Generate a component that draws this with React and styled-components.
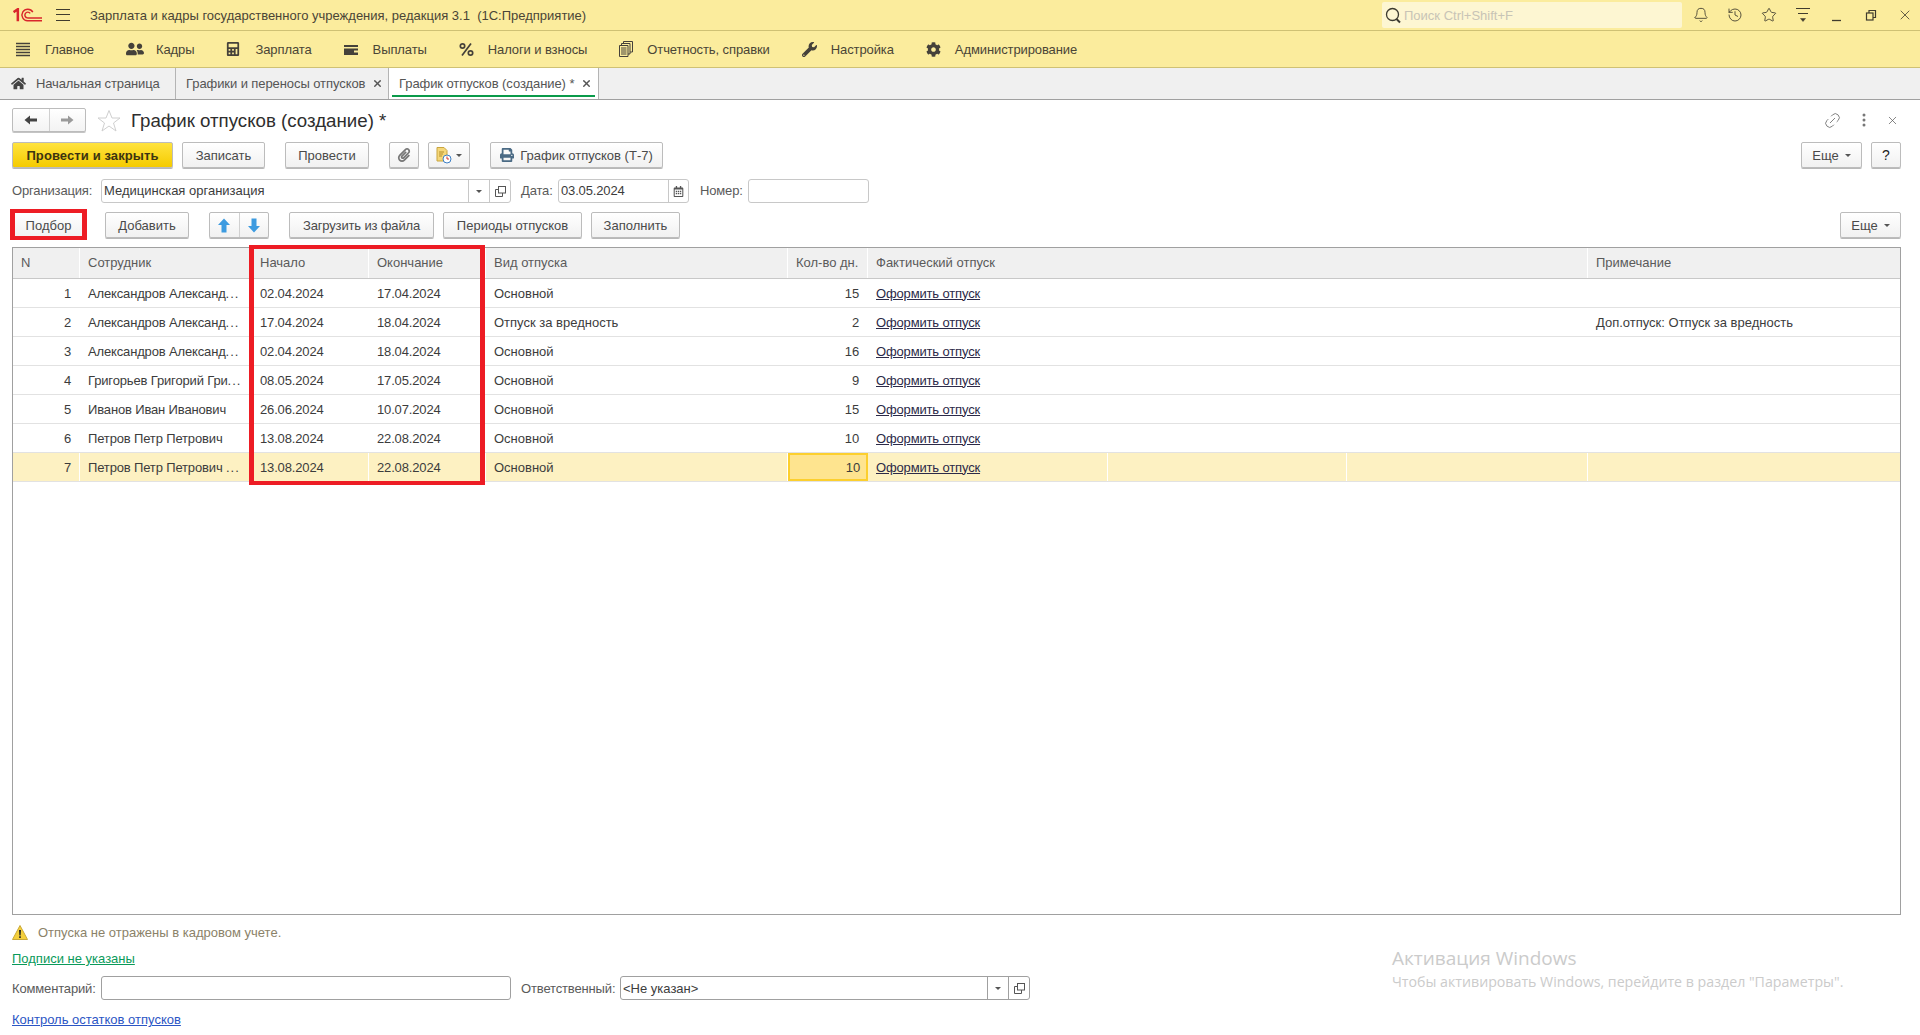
import React from 'react';
import styled, { createGlobalStyle } from 'styled-components';
import { Bell, History, Star, X, Link2 } from 'lucide-react';
import { FaHome, FaWrench, FaCog, FaPrint, FaPaperclip, FaUserFriends, FaCalculator, FaRegCalendarAlt } from 'react-icons/fa';

const GlobalStyle = createGlobalStyle`
  html, body { margin: 0; padding: 0; background: #fff; }
  body { font-family: "Liberation Sans", Arial, sans-serif; font-size: 13px; color: #3c3c3c; overflow: hidden; }
  * { box-sizing: border-box; }
`;

const Page = styled.div`
  position: relative;
  width: 1920px;
  height: 1035px;
  display: flex;
  flex-direction: column;
  overflow: hidden;
`;

/* ---- top bars ---- */
const TitleBar = styled.div`
  height: 31px;
  display: flex;
  align-items: center;
  padding: 0 7px 0 13px;
  background: #fbec9d;
  border-bottom: 1px solid #cfc174;
`;
const LogoBox = styled.div`
  display: flex;
  margin-right: 14px;
`;
const Burger = styled.div`
  width: 14px;
  height: 12px;
  margin-right: 20px;
  border-top: 1px solid #403c2e;
  border-bottom: 1px solid #403c2e;
  position: relative;
  &::after {
    content: '';
    position: absolute;
    left: 0; right: 0; top: 4px;
    border-top: 1px solid #403c2e;
  }
`;
const AppTitle = styled.div`
  flex: 1;
  color: #4a4536;
  font-size: 13px;
  white-space: pre;
`;
const Search = styled.div`
  width: 300px;
  height: 26px;
  margin-right: 11px;
  display: flex;
  align-items: center;
  gap: 2px;
  padding-left: 3px;
  background: #fdf6d2;
  border-radius: 2px;
  color: #c8c4b6;
  font-size: 13px;
`;
const SysIcons = styled.div`
  display: flex;
  align-items: center;
  gap: 18px;
  color: #403c2e;
`;
const SysIcon = styled.div`
  width: 16px;
  height: 16px;
  display: flex;
  align-items: center;
  justify-content: center;
`;

const SectionBar = styled.div`
  height: 37px;
  display: flex;
  align-items: center;
  gap: 32px;
  padding-left: 16px;
  background: #fbec9d;
  border-bottom: 1px solid #cfc174;
`;
const SectionItem = styled.div`
  display: flex;
  align-items: center;
  gap: ${({ $gap }) => $gap || 14}px;
  color: #4a4536;
  letter-spacing: -0.1px;
  white-space: nowrap;
  svg { flex: none; color: #45413a; }
`;

const TabBar = styled.div`
  height: 32px;
  display: flex;
  background: #f0f0f0;
  border-bottom: 1px solid #a0a0a0;
`;
const Tab = styled.div`
  position: relative;
  width: ${({ $w }) => $w}px;
  display: flex;
  align-items: center;
  gap: ${({ $home }) => ($home ? 10 : 7)}px;
  padding-left: ${({ $home }) => ($home ? 11 : 10)}px;
  border-right: 1px solid #b4b4b4;
  background: ${({ $active }) => ($active ? '#fff' : 'transparent')};
  color: #555;
  letter-spacing: ${({ $home }) => ($home ? -0.12 : -0.08)}px;
  white-space: nowrap;
  svg { flex: none; }
  ${({ $active }) =>
    $active &&
    `&::after {
      content: '';
      position: absolute;
      left: 3px; right: 3px; bottom: 2px;
      height: 2px;
      background: #0a9a4a;
    }`}
`;

/* ---- form ---- */
const Form = styled.div`
  flex: 1;
  display: flex;
  flex-direction: column;
  padding: 8px 19px 0 12px;
`;
const Heading = styled.div`
  height: 24px;
  display: flex;
  align-items: center;
`;
const NavGroup = styled.div`
  width: 74px;
  height: 24px;
  display: flex;
  border: 1px solid #bcbcbc;
  border-radius: 2px;
  box-shadow: 0 1px 0 #c4c4c4;
  background: linear-gradient(#fff, #f3f3f3);
  margin-right: 11px;
`;
const NavButton = styled.div`
  flex: 1;
  display: flex;
  align-items: center;
  justify-content: center;
  &:first-child { border-right: 1px solid #d0d0d0; }
`;
const FormTitle = styled.div`
  margin-left: 10px;
  padding-top: 1px;
  font-size: 18.7px;
  color: #2e2e2e;
  flex: 1;
`;
const HeadTools = styled.div`
  display: flex;
  align-items: center;
  gap: 20px;
  margin-right: 2px;
  color: #777;
`;
const Row = styled.div`
  display: flex;
  align-items: center;
  margin-top: ${({ $top }) => $top}px;
`;
const Button = styled.div`
  position: relative;
  height: 26px;
  width: ${({ $w }) => $w}px;
  margin-left: ${({ $ml }) => $ml || 0}px;
  display: flex;
  align-items: center;
  justify-content: center;
  gap: ${({ $gap }) => $gap || 6}px;
  flex: none;
  border: 1px solid #bcbcbc;
  border-radius: 2px;
  box-shadow: 0 1px 0 #b8b8b8;
  background: ${({ $primary }) =>
    $primary ? 'linear-gradient(#ffe33e, #f5cb00)' : 'linear-gradient(#fff, #f1f1f1)'};
  color: ${({ $primary }) => ($primary ? '#3c3410' : '#4a4a4a')};
  font-weight: ${({ $primary }) => ($primary ? 700 : 400)};
  letter-spacing: ${({ $primary, $tight }) => ($primary ? 0.1 : $tight ? -0.15 : 0)}px;
  white-space: nowrap;
`;
const HelpButton = styled(Button)`
  color: #222;
  font-size: 14px;
`;
const Caret = styled.span`
  width: 0;
  height: 0;
  border-left: 3px solid transparent;
  border-right: 3px solid transparent;
  border-top: 3px solid #555;
`;
const Spacer = styled.div`
  flex: 1;
`;
const SplitButton = styled(Button)`
  gap: 0;
  padding: 0;
`;
const SplitPart = styled.div`
  flex: 1;
  height: 100%;
  display: flex;
  align-items: center;
  justify-content: center;
  &:first-child { border-right: 1px solid #d0d0d0; }
`;
const Label = styled.div`
  margin-left: ${({ $ml }) => $ml || 0}px;
  width: ${({ $w }) => ($w ? `${$w}px` : 'auto')};
  padding-bottom: ${({ $lift }) => ($lift ? 2 : 0)}px;
  color: #5a5a5a;
  letter-spacing: -0.15px;
  white-space: nowrap;
  flex: none;
`;
const Field = styled.div`
  height: 24px;
  width: ${({ $w }) => $w}px;
  margin-left: ${({ $ml }) => $ml || 0}px;
  display: flex;
  align-items: center;
  flex: none;
  background: #fff;
  border: 1px solid ${({ $strong }) => ($strong ? '#a0a0a0' : '#c8c8c8')};
  border-radius: 3px;
  color: #3c3c3c;
`;
const FieldText = styled.div`
  flex: 1;
  padding-left: 2px;
  padding-bottom: ${({ $lift }) => ($lift ? 2 : 0)}px;
  letter-spacing: ${({ $tight }) => ($tight ? -0.15 : 0)}px;
  white-space: nowrap;
`;
const FieldAddon = styled.div`
  width: ${({ $w }) => $w}px;
  height: 100%;
  display: flex;
  align-items: center;
  justify-content: center;
  border-left: 1px solid ${({ $strong }) => ($strong ? '#a0a0a0' : '#c8c8c8')};
  color: #555;
`;
const Highlight = styled.div`
  position: absolute;
  border: solid #ed1c24;
  border-width: 4px 5px;
  pointer-events: none;
`;
const PickHighlight = styled(Highlight)`
  left: -3px;
  right: -3px;
  top: -4px;
  bottom: -3px;
`;

/* ---- table ---- */
const COLUMNS = '67px 172px 117px 117px 302px 80px 240px 239px 241px 312px';
const TableBox = styled.div`
  position: relative;
  height: 668px;
  margin-top: 9px;
  border: 1px solid #a0a0a0;
`;
const DatesHighlight = styled(Highlight)`
  left: 236px;
  top: -3px;
  width: 236px;
  height: 240px;
`;
const HeadRow = styled.div`
  height: 31px;
  display: grid;
  grid-template-columns: ${COLUMNS};
  background: #f0f0f0;
  border-bottom: 1px solid #c8c8c8;
`;
const HeadCell = styled.div`
  display: flex;
  align-items: center;
  padding: 0 8px 2px;
  color: #5a5a5a;
  border-right: 1px solid #fff;
  white-space: nowrap;
  grid-column: span ${({ $span }) => $span || 1};
  &:last-child { border-right: 0; }
`;
const DataRow = styled.div`
  height: 29px;
  display: grid;
  grid-template-columns: ${COLUMNS};
  background: ${({ $selected }) => ($selected ? '#fdf1c2' : '#fff')};
  border-bottom: 1px solid #e2e2e2;
`;
const Cell = styled.div`
  display: flex;
  align-items: center;
  justify-content: ${({ $right }) => ($right ? 'flex-end' : 'flex-start')};
  padding: 0 8px;
  min-width: 0;
  color: #3c3c3c;
  letter-spacing: ${({ $plain }) => ($plain ? 0 : -0.15)}px;
  white-space: pre;
  border-right: 1px solid ${({ $selected }) => ($selected ? '#fff' : 'transparent')};
  ${({ $current }) => $current && 'background: #fee48f; border: 2px solid #fccf2e; padding-right: 6px;'}
`;
const RowLink = styled.span`
  color: #2c2a48;
  text-decoration: underline;
`;
const CutMark = styled.span`
  letter-spacing: 1px;
`;

/* ---- footer ---- */
const Notice = styled.div`
  display: flex;
  align-items: center;
  gap: 10px;
  height: 18px;
  margin-top: 8px;
  color: #8b8269;
`;
const FooterLink = styled.div`
  margin-top: ${({ $top }) => $top}px;
  height: 16px;
  line-height: 16px;
  color: ${({ $color }) => $color};
  text-decoration: underline;
  white-space: nowrap;
`;
const Activation = styled.div`
  position: absolute;
  left: 1392px;
  top: 945px;
  color: #cbcbcb;
  font-family: "Open Sans", sans-serif;
  font-size: 14.2px;
  line-height: 22px;
  white-space: nowrap;
`;
const ActivationTitle = styled.div`
  font-size: 19px;
  line-height: 26px;
`;

const LogoIcon = () => (
  <svg width="29" height="14" viewBox="0 0 30 14" fill="none" stroke="#d9262c" strokeWidth="1.5">
    <path d="M0.5 4 L5 1 V13.5" strokeWidth="2.6" />
    <path d="M20.5 4 A6 6 0 1 0 15 13 H30" />
    <path d="M17.8 5.4 A3 3 0 1 0 15 10 H30" />
  </svg>
);
const SearchIcon = () => (
  <svg width="17" height="17" viewBox="0 0 17 17" fill="none" stroke="#3c3a30" strokeWidth="1.3">
    <circle cx="7.5" cy="7.5" r="6" />
    <path d="M11.5 12 L15 15.5" strokeWidth="2" />
  </svg>
);
const FilterIcon = () => (
  <svg width="16" height="16" viewBox="0 0 16 16" fill="#403c2e" stroke="#403c2e">
    <path d="M1 1.5 H15 M3 6.5 H13" fill="none" />
    <path d="M5.5 11.5 H10.5 L8 14.5 Z" strokeWidth="0.5" />
  </svg>
);
const MinimizeIcon = () => (
  <svg width="16" height="16" viewBox="0 0 16 16" stroke="#403c2e" strokeWidth="1.3">
    <path d="M3 13.5 H12" />
  </svg>
);
const RestoreIcon = () => (
  <svg width="16" height="16" viewBox="0 0 16 16" fill="none" stroke="#403c2e" strokeWidth="1.2">
    <rect x="3.5" y="6" width="6.5" height="7" />
    <path d="M6 6 V3.5 H12.5 V10.5 H10" />
  </svg>
);
const MenuIcon = () => (
  <svg width="15" height="15" viewBox="0 0 15 15" stroke="#45413a" strokeWidth="2">
    <path d="M0 1.5 H14 M0 4.5 H14 M0 7.5 H14 M0 10.5 H14 M0 13.5 H14" strokeWidth="1.6" />
  </svg>
);
const CardIcon = () => (
  <svg width="15" height="15" viewBox="0 0 15 15" fill="#45413a">
    <path d="M0 3 H14 V5 H0 Z M0 6.5 H14 V13 H0 Z" />
    <path d="M10 8.5 H14 V10.5 H10 Z" fill="#fbec9d" />
  </svg>
);
const PercentIcon = () => (
  <svg width="15" height="15" viewBox="0 0 15 15" fill="none" stroke="#45413a" strokeWidth="1.7">
    <circle cx="3.5" cy="4" r="2.2" />
    <circle cx="11.5" cy="11" r="2.2" />
    <path d="M12 1.5 L3 13.5" />
  </svg>
);
const ReportsIcon = () => (
  <svg width="14" height="16" viewBox="0 0 14 16" fill="none" stroke="#45413a">
    <path d="M4.5 3 V0.5 H13.5 V11 H11" />
    <path d="M2.5 5 V2.5 H11 V13 H9" />
    <path d="M0.5 4.5 H9 V15.5 H0.5 Z M2 7 H7.5 M2 9 H7.5 M2 11 H7.5 M2 13 H7.5" />
  </svg>
);
const NavArrow = ({ flip, color }) => (
  <svg width="14" height="12" viewBox="0 0 14 12" fill={color} style={flip ? { transform: 'scaleX(-1)' } : undefined}>
    <path d="M0.5 6 L6 1.5 V4.5 H13 V7.5 H6 V10.5 Z" />
  </svg>
);
const HollowStar = () => (
  <svg width="24" height="23" viewBox="0 0 24 23" fill="none" stroke="#cfcfcf">
    <path d="M12 1.5 L15 9 H23 L16.5 14 L19 22 L12 17 L5 22 L7.5 14 L1 9 H9 Z" />
  </svg>
);
const DotsIcon = () => (
  <svg width="4" height="14" viewBox="0 0 4 14" fill="#777">
    <circle cx="2" cy="2" r="1.5" />
    <circle cx="2" cy="7" r="1.5" />
    <circle cx="2" cy="12" r="1.5" />
  </svg>
);
const DocIcon = () => (
  <svg width="16" height="17" viewBox="0 0 16 17">
    <path d="M1 0.5 H8 L11 3.5 V14 H1 Z" fill="#f5d77a" stroke="#c9a53e" />
    <path d="M3 5 H8 M3 7 H7 M3 9 H6" stroke="#b58f2a" />
    <circle cx="11" cy="12" r="4" fill="#fff" stroke="#3d7fc4" />
    <path d="M11 9.5 V12 H13" stroke="#d9362c" fill="none" />
  </svg>
);
const BlueArrow = ({ down }) => (
  <svg width="12" height="15" viewBox="0 0 12 15" fill="#3d9be0" style={down ? { transform: 'scaleY(-1)' } : undefined}>
    <path d="M6 0.5 L12 7 H8.5 V14.5 H3.5 V7 H0 Z" />
  </svg>
);
const OpenIcon = () => (
  <svg width="11" height="11" viewBox="0 0 11 11" fill="none" stroke="#555">
    <rect x="3.5" y="0.5" width="7" height="6.5" />
    <path d="M3.5 3.5 H0.5 V10.5 H7.5 V7" />
  </svg>
);
const WarnIcon = () => (
  <svg width="16" height="15" viewBox="0 0 16 15">
    <path d="M8 0.5 L15.5 14.5 H0.5 Z" fill="#f4cf3d" stroke="#c9a93a" strokeLinejoin="round" />
    <path d="M7 5 H9 L8.6 10.5 H7.4 Z M7.2 11.3 H8.8 V13 H7.2 Z" fill="#222" />
  </svg>
);

const rows = [
  ['1', 'Александров Александ', true, '02.04.2024', '17.04.2024', 'Основной', '15', ''],
  ['2', 'Александров Александ', true, '17.04.2024', '18.04.2024', 'Отпуск за вредность', '2', 'Доп.отпуск: Отпуск за вредность'],
  ['3', 'Александров Александ', true, '02.04.2024', '18.04.2024', 'Основной', '16', ''],
  ['4', 'Григорьев Григорий Гри', true, '08.05.2024', '17.05.2024', 'Основной', '9', ''],
  ['5', 'Иванов Иван Иванович', false, '26.06.2024', '10.07.2024', 'Основной', '15', ''],
  ['6', 'Петров Петр Петрович', false, '13.08.2024', '22.08.2024', 'Основной', '10', ''],
  ['7', 'Петров Петр Петрович ', true, '13.08.2024', '22.08.2024', 'Основной', '10', ''],
];

const App = () => (
  <Page>
    <GlobalStyle />
    <TitleBar>
      <LogoBox><LogoIcon /></LogoBox>
      <Burger />
      <AppTitle>Зарплата и кадры государственного учреждения, редакция 3.1  (1С:Предприятие)</AppTitle>
      <Search><SearchIcon />Поиск Ctrl+Shift+F</Search>
      <SysIcons>
        <SysIcon><Bell size={16} strokeWidth={1.3} /></SysIcon>
        <SysIcon><History size={16} strokeWidth={1.3} /></SysIcon>
        <SysIcon><Star size={16} strokeWidth={1.3} /></SysIcon>
        <SysIcon><FilterIcon /></SysIcon>
        <SysIcon><MinimizeIcon /></SysIcon>
        <SysIcon><RestoreIcon /></SysIcon>
        <SysIcon><X size={16} strokeWidth={1.2} /></SysIcon>
      </SysIcons>
    </TitleBar>

    <SectionBar>
      <SectionItem $gap={14}><MenuIcon />Главное</SectionItem>
      <SectionItem $gap={12}><FaUserFriends size={18} />Кадры</SectionItem>
      <SectionItem $gap={15}><FaCalculator size={14} />Зарплата</SectionItem>
      <SectionItem><CardIcon />Выплаты</SectionItem>
      <SectionItem><PercentIcon />Налоги и взносы</SectionItem>
      <SectionItem><ReportsIcon />Отчетность, справки</SectionItem>
      <SectionItem><FaWrench size={15} />Настройка</SectionItem>
      <SectionItem><FaCog size={15} />Администрирование</SectionItem>
    </SectionBar>

    <TabBar>
      <Tab $w={176} $home><FaHome size={15} color="#444" />Начальная страница</Tab>
      <Tab $w={213}>Графики и переносы отпусков<X size={11} strokeWidth={3} color="#555" /></Tab>
      <Tab $w={210} $active>График отпусков (создание) *<X size={11} strokeWidth={3} color="#555" /></Tab>
    </TabBar>

    <Form>
      <Heading>
        <NavGroup>
          <NavButton><NavArrow color="#444" /></NavButton>
          <NavButton><NavArrow flip color="#9a9a9a" /></NavButton>
        </NavGroup>
        <HollowStar />
        <FormTitle>График отпусков (создание) *</FormTitle>
        <HeadTools>
          <Link2 size={19} strokeWidth={1.1} style={{ transform: 'rotate(-45deg)' }} />
          <DotsIcon />
          <X size={13} strokeWidth={1.3} color="#555" />
        </HeadTools>
      </Heading>

      <Row $top={10}>
        <Button $primary $w={161}>Провести и закрыть</Button>
        <Button $w={83} $ml={9}>Записать</Button>
        <Button $w={84} $ml={20}>Провести</Button>
        <Button $w={30} $ml={20}><FaPaperclip size={14} color="#777" /></Button>
        <Button $w={42} $ml={9} $gap={4}><DocIcon /><Caret /></Button>
        <Button $w={173} $ml={20}><FaPrint size={14} color="#4a6a84" />График отпусков (Т-7)</Button>
        <Spacer />
        <Button $w={61}>Еще<Caret /></Button>
        <HelpButton $w={30} $ml={9}>?</HelpButton>
      </Row>

      <Row $top={11}>
        <Label $w={89} $lift>Организация:</Label>
        <Field $w={410}>
          <FieldText $lift>Медицинская организация</FieldText>
          <FieldAddon $w={21}><Caret /></FieldAddon>
          <FieldAddon $w={21}><OpenIcon /></FieldAddon>
        </Field>
        <Label $ml={10} $w={37} $lift>Дата:</Label>
        <Field $w={131}>
          <FieldText $lift $tight>03.05.2024</FieldText>
          <FieldAddon $w={20}><FaRegCalendarAlt size={11} /></FieldAddon>
        </Field>
        <Label $ml={11} $w={48} $lift>Номер:</Label>
        <Field $w={121} />
      </Row>

      <Row $top={9}>
        <Button $w={73}>Подбор<PickHighlight /></Button>
        <Button $w={84} $ml={20}>Добавить</Button>
        <SplitButton $w={60} $ml={20}>
          <SplitPart><BlueArrow /></SplitPart>
          <SplitPart><BlueArrow down /></SplitPart>
        </SplitButton>
        <Button $w={145} $ml={20} $tight>Загрузить из файла</Button>
        <Button $w={139} $ml={9}>Периоды отпусков</Button>
        <Button $w={89} $ml={9}>Заполнить</Button>
        <Spacer />
        <Button $w={61}>Еще<Caret /></Button>
      </Row>

      <TableBox>
        <HeadRow>
          <HeadCell>N</HeadCell>
          <HeadCell>Сотрудник</HeadCell>
          <HeadCell>Начало</HeadCell>
          <HeadCell>Окончание</HeadCell>
          <HeadCell>Вид отпуска</HeadCell>
          <HeadCell>Кол-во дн.</HeadCell>
          <HeadCell $span={3}>Фактический отпуск</HeadCell>
          <HeadCell>Примечание</HeadCell>
        </HeadRow>
        {rows.map((r, i) => {
          const selected = i === rows.length - 1;
          return (
            <DataRow key={r[0]} $selected={selected}>
              <Cell $right $selected={selected}>{r[0]}</Cell>
              <Cell $selected={selected}>
                <span>{r[1]}{r[2] && <CutMark>...</CutMark>}</span>
              </Cell>
              <Cell $selected={selected}>{r[3]}</Cell>
              <Cell $selected={selected}>{r[4]}</Cell>
              <Cell $plain $selected={selected}>{r[5]}</Cell>
              <Cell $right $current={selected}>{r[6]}</Cell>
              <Cell $selected={selected}><RowLink>Оформить отпуск</RowLink></Cell>
              <Cell $selected={selected} />
              <Cell $selected={selected} />
              <Cell $plain>{r[7]}</Cell>
            </DataRow>
          );
        })}
        <DatesHighlight />
      </TableBox>

      <Notice><WarnIcon />Отпуска не отражены в кадровом учете.</Notice>
      <FooterLink $top={10} $color="#0a9a5a">Подписи не указаны</FooterLink>

      <Row $top={9}>
        <Label $w={89}>Комментарий:</Label>
        <Field $w={410} $strong />
        <Label $ml={10} $w={99}>Ответственный:</Label>
        <Field $w={410} $strong>
          <FieldText>&lt;Не указан&gt;</FieldText>
          <FieldAddon $strong $w={21}><Caret /></FieldAddon>
          <FieldAddon $strong $w={21}><OpenIcon /></FieldAddon>
        </Field>
      </Row>

      <FooterLink $top={12} $color="#2b55c4">Контроль остатков отпусков</FooterLink>
    </Form>

    <Activation>
      <ActivationTitle>Активация Windows</ActivationTitle>
      Чтобы активировать Windows, перейдите в раздел "Параметры".
    </Activation>
  </Page>
);

export default App;
